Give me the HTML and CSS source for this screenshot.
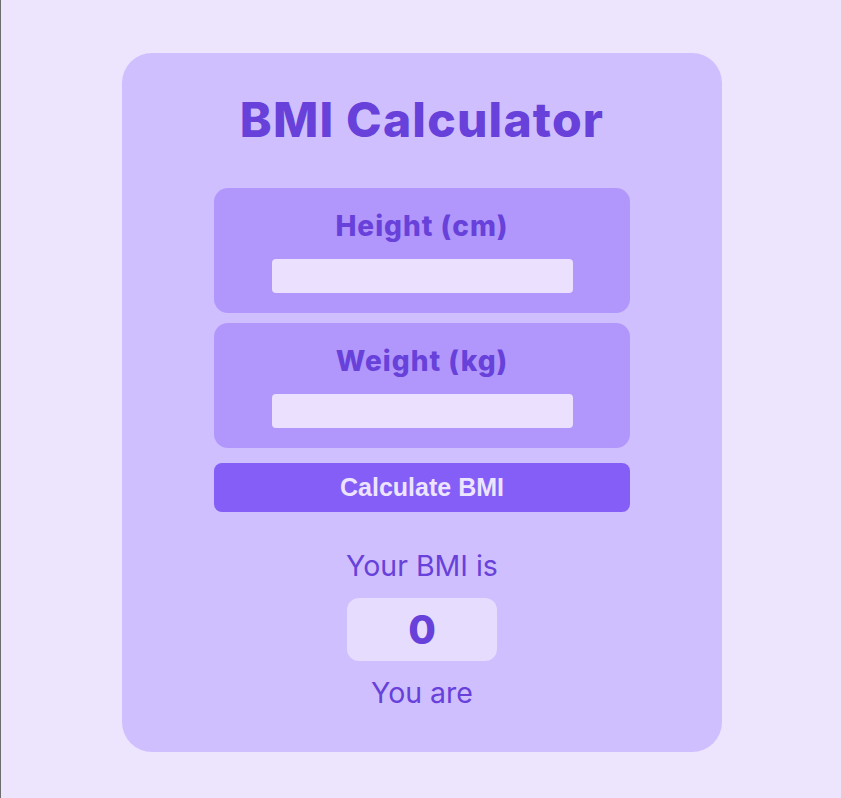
FILE: index.html
```html
<!DOCTYPE html>
<html lang="en">
<head>
<meta charset="utf-8">
<title>BMI Calculator</title>
<link rel="stylesheet" href="styles.css">
</head>
<body>
<main class="page">
  <section class="card">
    <h1 class="title">BMI Calculator</h1>
    <div class="field">
      <label class="field-label" for="height">Height (cm)</label>
      <input class="field-input" id="height" type="text">
    </div>
    <div class="field">
      <label class="field-label" for="weight">Weight (kg)</label>
      <input class="field-input" id="weight" type="text">
    </div>
    <button class="calc-btn" type="button">Calculate BMI</button>
    <p class="result-label">Your BMI is</p>
    <div class="result-box">0</div>
    <p class="result-label result-status">You are</p>
  </section>
</main>
</body>
</html>
```
FILE: styles.css
```css
html, body {
  margin: 0;
  padding: 0;
  height: 100%;
}
body {
  background: #ede4fe;
  border-left: 1px solid #6e6e6e;
  box-sizing: border-box;
  font-family: "Inter", "Noto Sans", sans-serif;
  color: #6741d9;
}
.page {
  display: flex;
  justify-content: center;
  padding-top: 53px;
  padding-left: 2px;
}
.card {
  width: 600px;
  height: 699px;
  box-sizing: border-box;
  background: #d0bfff;
  border-radius: 30px;
  display: flex;
  flex-direction: column;
  align-items: center;
  padding-top: 35px;
}
.title {
  margin: 0 0 36px;
  font-size: 48px;
  line-height: 64px;
  font-weight: 800;
  letter-spacing: 1.2px;
  color: #6741d9;
}
.field {
  width: 416px;
  height: 125px;
  box-sizing: border-box;
  background: #b197fc;
  border-radius: 14px;
  display: flex;
  flex-direction: column;
  align-items: center;
  padding-top: 20px;
  margin-bottom: 10px;
}
.field-label {
  font-size: 28px;
  font-weight: 800;
  letter-spacing: 1px;
  line-height: 36px;
  color: #6741d9;
}
.field-input {
  margin-top: 15px;
  width: 301px;
  height: 34px;
  box-sizing: border-box;
  border: none;
  border-radius: 4px;
  background: #ebe1fe;
  outline: none;
}
.calc-btn {
  margin-top: 5px;
  width: 416px;
  height: 49px;
  border: none;
  border-radius: 8px;
  background: #845ef7;
  color: #ede4ff;
  font-family: "Liberation Sans", Arial, sans-serif;
  font-weight: 700;
  font-size: 25px;
  cursor: pointer;
}
.result-label {
  margin: 36px 0 0;
  font-size: 28.5px;
  line-height: 36px;
  font-weight: 400;
  color: #6741d9;
}
.result-box {
  margin-top: 14px;
  width: 150px;
  height: 63px;
  border-radius: 12px;
  background: #e6dcfe;
  display: flex;
  align-items: center;
  justify-content: center;
  font-size: 40px;
  font-weight: 800;
  color: #6741d9;
}
.result-status {
  margin-top: 14px;
}
```
